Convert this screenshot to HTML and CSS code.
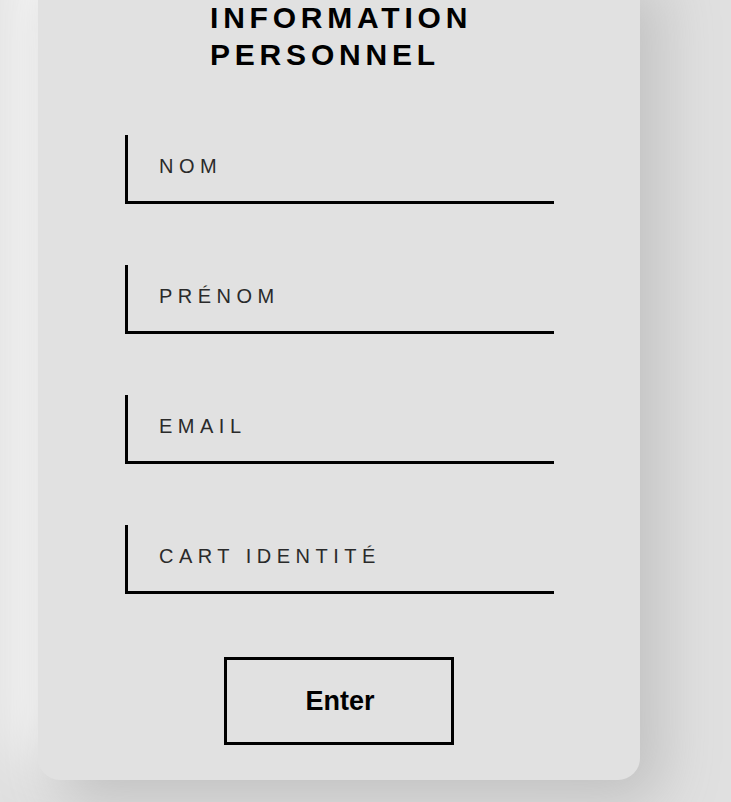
FILE: index.html
```html
<!DOCTYPE html>
<html lang="fr">
<head>
<meta charset="utf-8">
<title>Information personnel</title>
<link rel="stylesheet" href="styles.css">
</head>
<body>
<div class="page">
  <form class="card">
    <h2 class="title">INFORMATION<br>PERSONNEL</h2>
    <div class="fields">
      <div class="field"><label class="label">NOM</label></div>
      <div class="field"><label class="label">PRÉNOM</label></div>
      <div class="field"><label class="label">EMAIL</label></div>
      <div class="field"><label class="label">CART IDENTITÉ</label></div>
    </div>
    <div class="actions">
      <button type="button" class="btn">Enter</button>
    </div>
  </form>
</div>
</body>
</html>
```

FILE: styles.css
```css
html, body {
  margin: 0;
  padding: 0;
  height: 100%;
  overflow: hidden;
}

body {
  background: #e0e0e0;
  font-family: "Liberation Sans", Arial, sans-serif;
}

.page {
  padding-left: 38px;
}

.card {
  width: 602px;
  box-sizing: border-box;
  margin-top: -41px;
  padding: 40px 0 35px 0;
  background: #e1e1e1;
  border-radius: 22px;
  box-shadow: 20px 20px 60px #bebebe, -20px -20px 60px #ffffff;
}

.title {
  margin: 0;
  padding-left: 172px;
  font-size: 30px;
  line-height: 37px;
  font-weight: bold;
  letter-spacing: 4.8px;
  color: #000;
}

.fields {
  display: flex;
  flex-direction: column;
  gap: 61px;
  margin-top: 62px;
  margin-left: 87px;
  width: 429px;
}

.field {
  height: 69px;
  box-sizing: border-box;
  border-left: 3px solid #000;
  border-bottom: 3px solid #000;
  padding: 20px 0 0 31px;
}

.label {
  display: block;
  font-size: 20px;
  line-height: 23px;
  letter-spacing: 5.5px;
  color: #2a2a2a;
}

.actions {
  display: flex;
  justify-content: center;
  margin-top: 63px;
}

.btn {
  width: 230px;
  height: 88px;
  box-sizing: border-box;
  border: 3px solid #000;
  background: transparent;
  font-family: "Liberation Sans", Arial, sans-serif;
  font-size: 27px;
  font-weight: bold;
  color: #000;
  padding: 0 0 0 2px;
}
```
